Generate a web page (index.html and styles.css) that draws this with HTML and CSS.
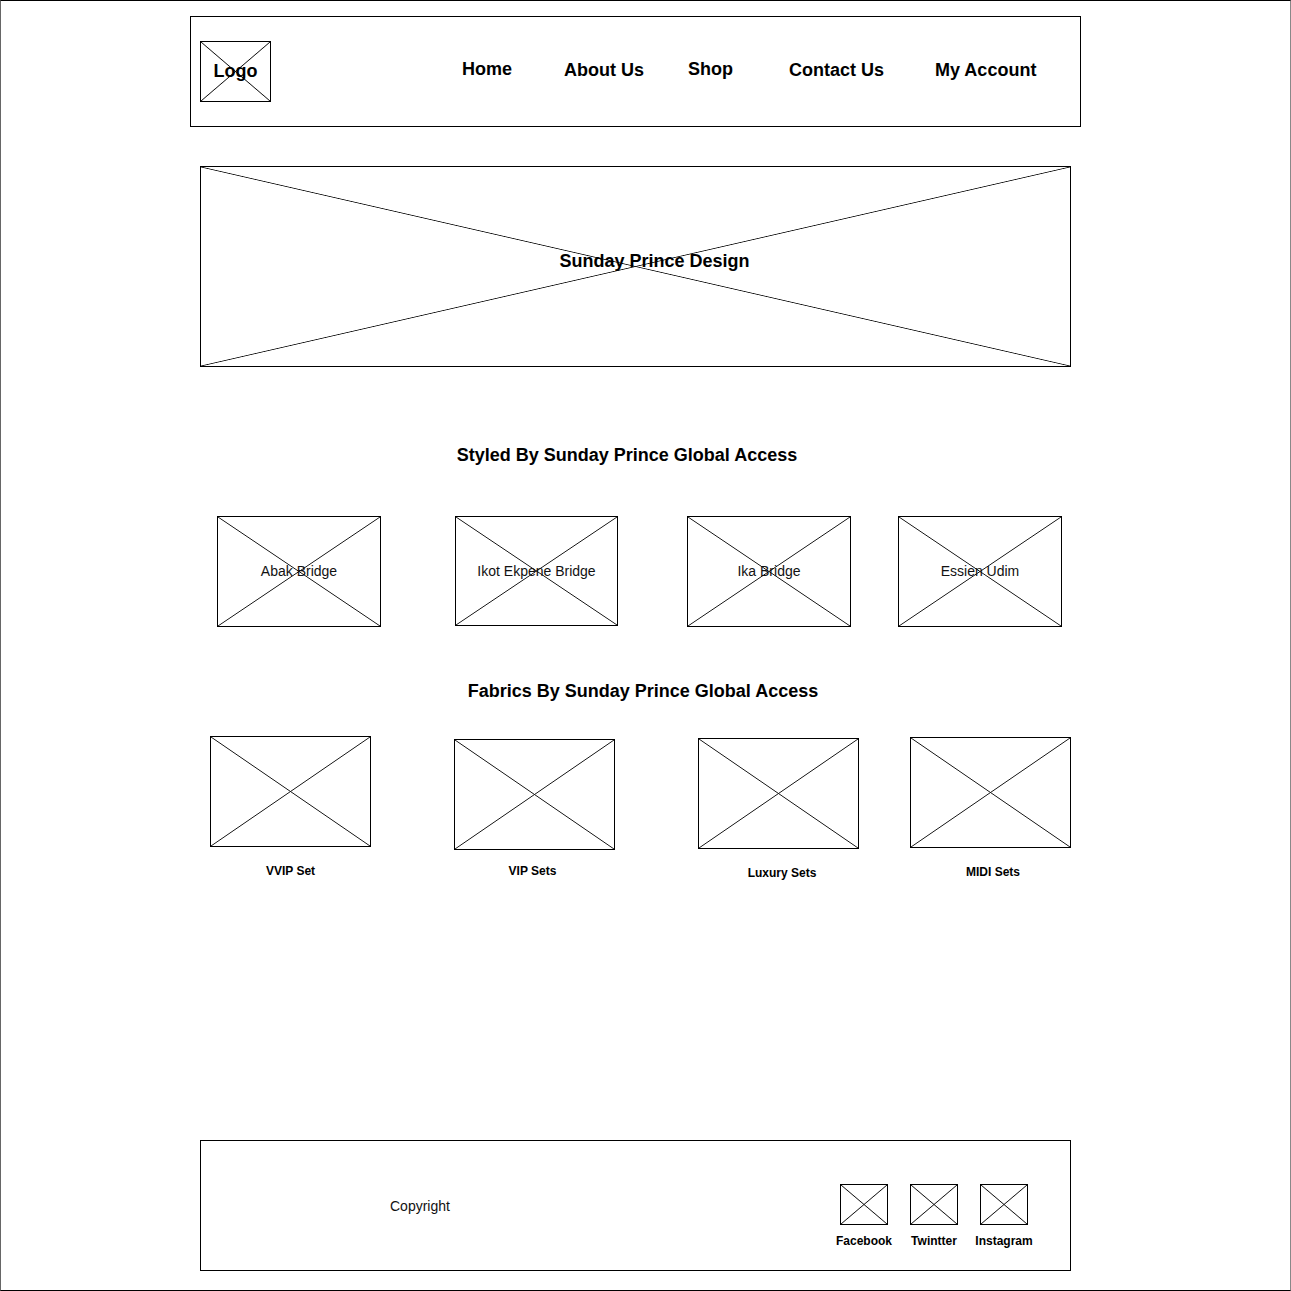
FILE: index.html
```html
<!DOCTYPE html>
<html lang="en">

<head>
  <meta charset="UTF-8">
  <title>Sunday Prince Design</title>
  <link rel="stylesheet" href="styles.css">
</head>

<body>
  <div class="frame">

    <!-- header -->
    <div class="header">
      <div class="ph logo">Logo</div>
      <div class="nav">
        <a href="#">Home</a>
        <a href="#">About Us</a>
        <a href="#">Shop</a>
        <a href="#">Contact Us</a>
        <a href="#">My Account</a>
      </div>
    </div>

    <div class="ph hero">
      <span>Sunday Prince Design</span>
    </div>

    <h2 class="section-title styled">Styled By Sunday Prince Global Access</h2>

    <div class="styled-row">
      <div class="ph card">Abak Bridge</div>
      <div class="ph card">Ikot Ekpene Bridge</div>
      <div class="ph card">Ika Bridge</div>
      <div class="ph card">Essien Udim</div>
    </div>

    <h2 class="section-title fabrics">Fabrics By Sunday Prince Global Access</h2>

    <div class="fabric-row">
      <div class="fabric">
        <div class="ph fabric-img"></div>
        <div class="fabric-label">VVIP Set</div>
      </div>
      <div class="fabric">
        <div class="ph fabric-img"></div>
        <div class="fabric-label">VIP Sets</div>
      </div>
      <div class="fabric">
        <div class="ph fabric-img"></div>
        <div class="fabric-label">Luxury Sets</div>
      </div>
      <div class="fabric">
        <div class="ph fabric-img"></div>
        <div class="fabric-label">MIDI Sets</div>
      </div>
    </div>

    <!-- footer -->
    <div class="footer">
      <div class="copyright">Copyright</div>
      <div class="social">
        <div class="social-item">
          <div class="ph social-icon"></div>
          <span>Facebook</span>
        </div>
        <div class="social-item">
          <div class="ph social-icon"></div>
          <span>Twintter</span>
        </div>
        <div class="social-item">
          <div class="ph social-icon"></div>
          <span>Instagram</span>
        </div>
      </div>
    </div>

  </div>
</body>

</html>
```

FILE: styles.css
```css
    body {
      font-family: "Liberation Sans", Arial, sans-serif;
      background-color: #ffffff;
      color: #000;
      margin: 0;
      padding: 0;
    }

    .frame {
      box-sizing: border-box;
      width: 1291px;
      height: 1291px;
      border: 1px solid #000;
      border-left-color: #666;
      border-right-color: #888;
      display: flex;
      flex-direction: column;
      align-items: flex-start;
    }

    /* placeholder box with a cross */
    .ph {
      box-sizing: border-box;
      border: 1px solid #000;
      background:
        linear-gradient(to top right, transparent calc(50% - 0.8px), #111 50%, transparent calc(50% + 0.8px)),
        linear-gradient(to bottom right, transparent calc(50% - 0.8px), #111 50%, transparent calc(50% + 0.8px));
    }

    .header {
      box-sizing: border-box;
      width: 891px;
      height: 111px;
      margin: 15px 0 0 189px;
      padding-left: 9px;
      border: 1px solid #000;
      display: flex;
      align-items: flex-start;
    }

    .logo {
      width: 71px;
      height: 61px;
      margin-top: 24px;
      display: flex;
      align-items: center;
      justify-content: center;
      font-size: 18px;
      font-weight: bold;
    }

    .nav {
      display: flex;
      align-items: flex-start;
      margin-top: 43px;
      margin-left: 191px;
    }

    .nav a {
      color: #000;
      text-decoration: none;
      font-size: 18px;
      font-weight: bold;
    }

    .nav a:nth-child(1),
    .nav a:nth-child(3) {
      margin-top: -1px;
    }

    .nav a:nth-child(2) {
      margin-left: 52px;
    }

    .nav a:nth-child(3) {
      margin-left: 44px;
    }

    .nav a:nth-child(4) {
      margin-left: 56px;
    }

    .nav a:nth-child(5) {
      margin-left: 51px;
    }

    .hero {
      width: 871px;
      height: 201px;
      margin: 39px 0 0 199px;
      padding: 0 0 10px 38px;
      display: flex;
      align-items: center;
      justify-content: center;
      font-size: 18px;
      font-weight: bold;
    }

    .section-title {
      box-sizing: border-box;
      width: 871px;
      margin: 0 0 0 199px;
      font-size: 18px;
      line-height: 21px;
      text-align: center;
    }

    .styled {
      margin-top: 78px;
      padding-right: 17px;
    }

    .fabrics {
      margin-top: 54px;
      padding-left: 15px;
    }

    .styled-row {
      display: flex;
      align-items: flex-start;
      margin-top: 50px;
    }

    .card {
      width: 164px;
      height: 111px;
      padding-bottom: 2px;
      display: flex;
      align-items: center;
      justify-content: center;
      font-size: 14px;
      color: #111;
    }

    .card:nth-child(1) {
      margin-left: 216px;
    }

    .card:nth-child(2) {
      width: 163px;
      height: 110px;
      padding-bottom: 0;
      margin-left: 74px;
    }

    .card:nth-child(3) {
      margin-left: 69px;
    }

    .card:nth-child(4) {
      margin-left: 47px;
    }

    .fabric-row {
      display: flex;
      align-items: flex-start;
      margin-top: 34px;
    }

    .fabric {
      display: flex;
      flex-direction: column;
      align-items: center;
    }

    .fabric-img {
      width: 161px;
      height: 111px;
    }

    .fabric-label {
      margin-top: 17px;
      font-size: 12px;
      font-weight: bold;
    }

    .fabric:nth-child(1) {
      margin-left: 209px;
    }

    .fabric:nth-child(2) {
      margin-left: 83px;
      margin-top: 3px;
    }

    .fabric:nth-child(2) .fabric-label {
      margin-top: 14px;
      padding-right: 4px;
    }

    .fabric:nth-child(3) {
      margin-left: 83px;
      margin-top: 2px;
    }

    .fabric:nth-child(3) .fabric-label {
      margin-top: 17px;
      padding-left: 7px;
    }

    .fabric:nth-child(4) {
      margin-left: 51px;
      margin-top: 1px;
    }

    .fabric:nth-child(4) .fabric-label {
      padding-left: 5px;
    }

    .footer {
      box-sizing: border-box;
      width: 871px;
      height: 131px;
      margin: auto 0 19px 199px;
      border: 1px solid #000;
      display: flex;
      align-items: center;
    }

    .copyright {
      margin-left: 189px;
      font-size: 14px;
      color: #111;
    }

    .social {
      display: flex;
      align-self: flex-start;
      margin: 43px 31px 0 auto;
    }

    .social-item {
      width: 70px;
      display: flex;
      flex-direction: column;
      align-items: center;
      font-size: 12px;
      font-weight: bold;
    }

    .social-icon {
      width: 48px;
      height: 41px;
      margin-bottom: 9px;
    }
```
